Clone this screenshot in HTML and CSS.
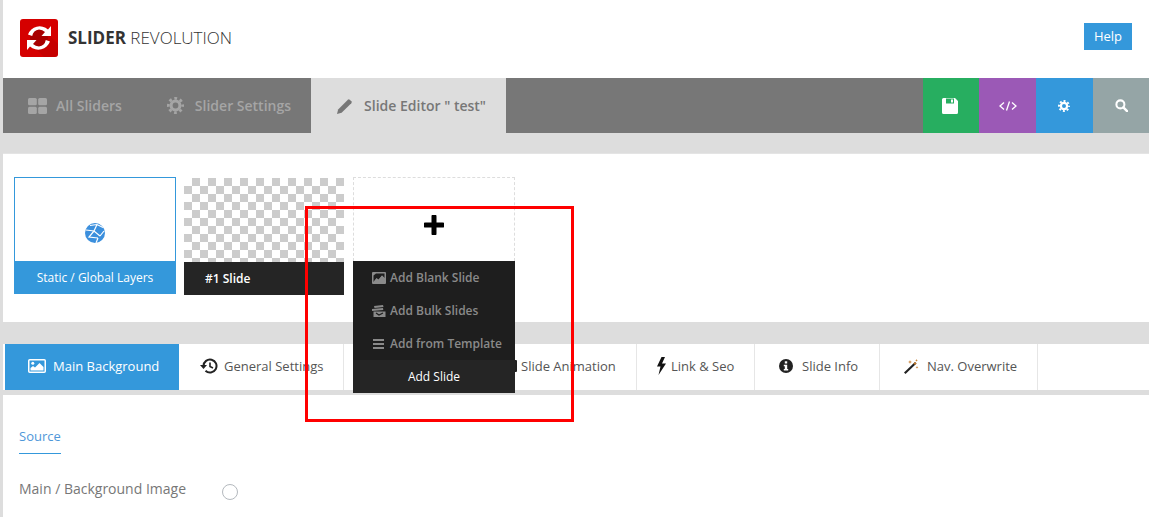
FILE: index.html
```html
<!DOCTYPE html>
<html lang="en">
<head>
<meta charset="utf-8">
<title>Slider Revolution</title>
<link rel="stylesheet" href="styles.css">
</head>
<body>
<div class="page">
  <header class="top">
    <div class="brand">
      <span class="logo">
        <svg viewBox="0 0 38 38" width="38" height="38">
          <path d="M11 25l13 13h14V25L26 13z" fill="#b00000" opacity=".4"/>
          <circle cx="19" cy="19" r="9" fill="#a80000"/>
          <path d="M19 10.500a8.500 8.500 0 0 1 6 2.500l-3.500 4H31V7l-3 3.500a12.500 12.500 0 0 0-20 5l4.200 1.500a8 8 0 0 1 6.800-6.500z" fill="#fff"/>
          <path d="M19 27.500a8.500 8.500 0 0 1-6-2.500l3.500-4H7v10l3-3.500a12.500 12.500 0 0 0 20-5L25.800 21a8 8 0 0 1-6.800 6.500z" fill="#fff"/>
        </svg>
      </span>
      <span class="brand-name"><b>SLIDER</b> <span class="light">REVOLUTION</span></span>
    </div>
    <a class="help">Help</a>
  </header>

  <nav class="nav">
    <a class="nav-item first">
      <svg class="nav-ico" viewBox="0 0 19 16" width="19" height="16"><g fill="#a5a5a5"><rect x="0" y="0" width="8.800" height="7.300" rx="1.500"/><rect x="10.200" y="0" width="8.800" height="7.300" rx="1.500"/><rect x="0" y="8.700" width="8.800" height="7.300" rx="1.500"/><rect x="10.200" y="8.700" width="8.800" height="7.300" rx="1.500"/></g></svg>
      All Sliders
    </a>
    <a class="nav-item second">
      <svg class="nav-ico" viewBox="0 0 20 20" width="17" height="17"><circle cx="10" cy="10" r="5.200" fill="none" stroke="#a5a5a5" stroke-width="3.600"/><circle cx="10" cy="10" r="8.400" fill="none" stroke="#a5a5a5" stroke-width="3.200" stroke-dasharray="3.300 3.300" stroke-dashoffset="1.650"/></svg>
      Slider Settings
    </a>
    <a class="nav-item active">
      <svg class="nav-ico" viewBox="0 0 18 18" width="16" height="16"><path d="M0 18l1.300-5.200L12.200 1.900a1.500 1.500 0 0 1 2.100 0l1.800 1.800a1.500 1.500 0 0 1 0 2.100L5.200 16.700z" fill="#777"/></svg>
      Slide Editor " test"
    </a>
    <div class="nav-actions">
      <a class="act green"><svg viewBox="0 0 16 16" width="16" height="16"><path d="M1.500 0H13l3 3v11.500a1.500 1.500 0 0 1-1.500 1.500h-13A1.500 1.500 0 0 1 0 14.500v-13A1.500 1.500 0 0 1 1.500 0z" fill="#fff"/><path d="M4 0.500h8v5H4z" fill="#27ae60"/><path d="M9 1.500h2v3H9z" fill="#fff"/></svg></a>
      <a class="act purple"><svg viewBox="0 0 18 10" width="18" height="10"><path d="M5 1.500L1 5l4 3.500M13 1.500L17 5l-4 3.500M10.500 0.500l-3 9" fill="none" stroke="#fff" stroke-width="1.300"/></svg></a>
      <a class="act blue"><svg viewBox="0 0 12 12" width="12" height="12"><circle cx="6" cy="6" r="3.100" fill="none" stroke="#fff" stroke-width="2.200"/><circle cx="6" cy="6" r="5" fill="none" stroke="#fff" stroke-width="2" stroke-dasharray="1.960 1.960" stroke-dashoffset="1"/></svg></a>
      <a class="act gray"><svg viewBox="0 0 14 14" width="13" height="13"><circle cx="5.800" cy="5.800" r="4.300" fill="none" stroke="#fff" stroke-width="2.200"/><path d="M9 9l4 4" stroke="#fff" stroke-width="2.600" stroke-linecap="round"/></svg></a>
    </div>
  </nav>

  <section class="slides">
    <div class="card static">
      <div class="card-thumb">
        <svg viewBox="0 0 20 20" width="20" height="20"><circle cx="10" cy="10" r="10" fill="#3b8fdd"/><path d="M1 7l8 1 6 5M9 8l-5 6 9 1M9 8l3-6.500M13 15l-2 5M15 13l4-5M5 2.500l7-1 6 3" fill="none" stroke="#fff" stroke-width="1.200"/></svg>
      </div>
      <div class="card-label">Static / Global Layers</div>
    </div>
    <div class="card slide">
      <div class="card-thumb checker"></div>
      <div class="card-label">#1 Slide</div>
    </div>
    <div class="card add">
      <div class="card-thumb">
        <svg viewBox="0 0 20 20" width="20" height="20"><path d="M10 1.500v17M1.500 10h17" stroke="#000" stroke-width="5" stroke-linecap="round"/></svg>
      </div>
      <div class="menu">
        <a class="menu-item"><svg viewBox="0 0 14 12" width="14" height="12"><rect width="14" height="12" rx="1" fill="#8a8a8a"/><path d="M1.500 10V3.500L4 1.500h8.500V6L10 3.500 6.500 8 4.500 6.500 1.500 10z" fill="#1e1e1e"/><path d="M1.500 10l3-4 2 1.500L10 3.500 12.500 6v4z" fill="#8a8a8a"/></svg>Add Blank Slide</a>
        <a class="menu-item"><svg viewBox="0 0 14 12" width="14" height="12"><path d="M2 1l9-1 .5 2-9 1zM0 4l11-1 .3 2L0 6zM1.500 6.500h12V12h-12z" fill="#8a8a8a"/><path d="M4 8l3 2 4-2" fill="none" stroke="#1e1e1e" stroke-width="1.200"/></svg>Add Bulk Slides</a>
        <a class="menu-item"><svg viewBox="0 0 14 12" width="14" height="12"><path d="M1 1h11v2H1zM1 5h11v2H1zM1 9h11v2H1z" fill="#8a8a8a"/></svg>Add from Template</a>
        <a class="menu-foot">Add Slide</a>
      </div>
    </div>
  </section>

  <section class="tabs">
    <a class="tab main">
      <svg viewBox="0 0 18 14" width="18" height="14"><rect x=".75" y=".75" width="16.500" height="12.500" rx="1" fill="none" stroke="#fff" stroke-width="1.500"/><circle cx="4.800" cy="4.200" r="1.500" fill="#fff"/><path d="M2.500 11.500V9l2.500-2 2 1.500L11.500 4 15.500 8v3.500z" fill="#fff"/></svg>
      Main Background
    </a>
    <a class="tab general">
      <svg viewBox="0 0 19 16" width="19" height="16"><path d="M3.500 8a6.500 6.500 0 1 1 2 4.700" fill="none" stroke="#222" stroke-width="2"/><path d="M0 7h7L3.500 11z" fill="#222"/><path d="M10 4.500V8.500l3 1.500" fill="none" stroke="#222" stroke-width="1.600"/></svg>
      General Settings
    </a>
    <a class="tab anim">
      <svg viewBox="0 0 12 12" width="12" height="12"><rect width="12" height="12" rx="1" fill="#222"/><rect x="3" y="1" width="6" height="10" fill="#fff"/></svg>
      Slide Animation
    </a>
    <a class="tab link">
      <svg viewBox="0 0 9 18" width="9" height="18"><path d="M4.500 0L0 9.500h3.500L1.500 18 9 6.500H5L8 0z" fill="#111"/></svg>
      Link &amp; Seo
    </a>
    <a class="tab info">
      <svg viewBox="0 0 14 14" width="14" height="14"><circle cx="7" cy="7" r="7" fill="#222"/><rect x="5.800" y="2.300" width="2.400" height="2.200" fill="#fff"/><path d="M4.800 5.800h3.400v4.300h1v1.500H4.800v-1.500h1V7.300h-1z" fill="#fff"/></svg>
      Slide Info
    </a>
    <a class="tab nav-over">
      <svg viewBox="0 0 15 15" width="15" height="15"><path d="M0 13.500L11 3l1.500 1.500L1.500 15z" fill="#222"/><path d="M9.500 4.500L11 3l1.500 1.500L11 6z" fill="#c77b2a"/><path d="M6 1l.5 1.500L8 3l-1.500.5L6 5l-.5-1.500L4 3l1.500-.5zM13 7l.4 1 1 .4-1 .4-.4 1-.4-1-1-.4 1-.4zM12.500 0l.4 1 1 .4-1 .4-.4 1-.4-1-1-.4 1-.4z" fill="#c77b2a"/></svg>
      Nav. Overwrite
    </a>
  </section>

  <section class="content">
    <a class="source">Source</a>
    <div class="row">
      <span class="row-label">Main / Background Image</span>
      <span class="radio"></span>
    </div>
  </section>

  <div class="highlight"></div>
</div>
</body>
</html>
```
FILE: styles.css
```css
* { box-sizing: border-box; }
html, body { margin: 0; padding: 0; height: 100%; overflow: hidden; }
body {
  background: #ddd;
  font-family: "Open Sans", sans-serif;
  color: #777;
}
.page {
  position: relative;
  margin-left: 3px;
  height: 517px;
  overflow: hidden;
}
svg { display: block; flex: none; }

/* header */
.top {
  height: 78px;
  background: #fff;
  display: flex;
  align-items: flex-start;
  justify-content: space-between;
  padding: 19px 17px 0 17px;
}
.brand { display: flex; align-items: center; gap: 10px; }
.logo {
  width: 38px;
  height: 38px;
  border-radius: 3px;
  background: #d50000;
  display: block;
  overflow: hidden;
}
.brand-name { font-size: 17px; line-height: 23px; margin-top: -2px; color: #333; white-space: nowrap; }
.brand-name b { font-weight: 700; }
.brand-name .light { font-weight: 300; }
.help {
  margin-top: 4px;
  width: 48px;
  height: 27px;
  background: #3498db;
  color: #fff;
  font-size: 13px;
  line-height: 27px;
  text-align: center;
}

/* nav */
.nav {
  height: 55px;
  background: #777;
  display: flex;
  align-items: stretch;
}
.nav-item {
  display: flex;
  align-items: center;
  font-size: 14px;
  font-weight: 600;
  color: #a5a5a5;
  white-space: nowrap;
}
.nav-ico { margin-right: 9px; }
.nav-item.first { padding-left: 25px; }
.nav-item.second { margin-left: 45px; }
.nav-item.second .nav-ico { margin-right: 11px; }
.nav-item.active {
  margin-left: 20px;
  width: 195px;
  padding-left: 26px;
  background: #ddd;
  color: #777;
}
.nav-item.active .nav-ico { margin-right: 11px; }
.nav-actions { display: flex; margin-left: auto; }
.act {
  width: 57px;
  display: flex;
  align-items: center;
  justify-content: center;
}
.act.green { background: #27ae60; width: 56px; padding-right: 2px; }
.act.purple { background: #9b59b6; }
.act.blue { background: #3498db; padding-right: 1px; }
.act.gray { background: #95a5a6; width: 56px; }

/* slides */
.slides {
  margin-top: 20px;
  height: 169px;
  background: #fff;
  border-top: 1px solid #e4e4e4;
  display: flex;
  align-items: flex-start;
  padding: 23px 0 0 11px;
  gap: 8px;
}
.card { width: 162px; height: 117px; display: flex; flex-direction: column; }
.card-thumb { height: 84px; display: flex; align-items: center; justify-content: center; }
.card-label {
  height: 33px;
  line-height: 33px;
  font-size: 12px;
  color: #fff;
}
.static .card-thumb {
  border: 1px solid #3498db;
  border-bottom: 0;
  padding-top: 27px;
}
.static .card-label { background: #3498db; text-align: center; }
.slide { width: 160px; margin-top: 1px; }
.checker {
  background: repeating-conic-gradient(#ccc 0 25%, #fff 0 50%) 0 0 / 16px 16px;
}
.slide .card-label { background: #252525; padding-left: 21px; font-weight: 600; }
.add { position: relative; margin-left: 1px; }
.add .card-thumb {
  border: 1px dashed #ddd;
  border-bottom: 0;
  padding-top: 11px;
}
.menu {
  position: absolute;
  left: 0;
  top: 84px;
  width: 162px;
  z-index: 2;
  background: #1e1e1e;
}
.menu-item {
  height: 33px;
  display: flex;
  align-items: center;
  gap: 4px;
  padding-left: 19px;
  font-size: 12px;
  font-weight: 600;
  color: #8a8a8a;
  white-space: nowrap;
}
.menu-foot {
  display: block;
  height: 33px;
  line-height: 33px;
  background: #252525;
  color: #fff;
  font-size: 12px;
  text-align: center;
}

/* tabs */
.tabs {
  margin-top: 22px;
  height: 46px;
  background: #fff;
  display: flex;
  align-items: stretch;
  padding-left: 2px;
}
.tab {
  display: flex;
  align-items: center;
  padding-bottom: 2px;
  font-size: 13px;
  color: #555;
  white-space: nowrap;
  border-right: 1px solid #e6e6e6;
}
.tab.main { width: 174px; background: #3498db; color: #fff; border-right: 0; padding-left: 23px; gap: 7px; }
.tab.general { margin-left: 1px; width: 164px; padding-left: 20px; gap: 5px; }
.tab.anim { width: 293px; padding-left: 161px; gap: 4px; }
.tab.link { width: 118px; padding-left: 20px; gap: 5px; }
.tab.info { width: 125px; padding-left: 24px; gap: 9px; }
.tab.nav-over { width: 158px; padding-left: 24px; gap: 8px; }

/* content */
.content {
  margin-top: 5px;
  height: 122px;
  background: #fff;
  padding: 29px 0 0 16px;
}
.source {
  display: inline-block;
  font-size: 13px;
  line-height: 18px;
  color: #4f97d9;
  padding-bottom: 8px;
  border-bottom: 1px solid #3498db;
}
.row { display: flex; align-items: center; margin-top: 23px; }
.row-label { font-size: 14px; color: #777; width: 203px; }
.radio {
  width: 16px;
  height: 16px;
  margin-top: 7px;
  border: 1px solid #b4b9be;
  border-radius: 50%;
  background: #fff;
}

/* annotation */
.highlight {
  position: absolute;
  left: 302px;
  top: 206px;
  width: 269px;
  height: 216px;
  border: 3px solid #f00;
  z-index: 3;
  pointer-events: none;
}
```
